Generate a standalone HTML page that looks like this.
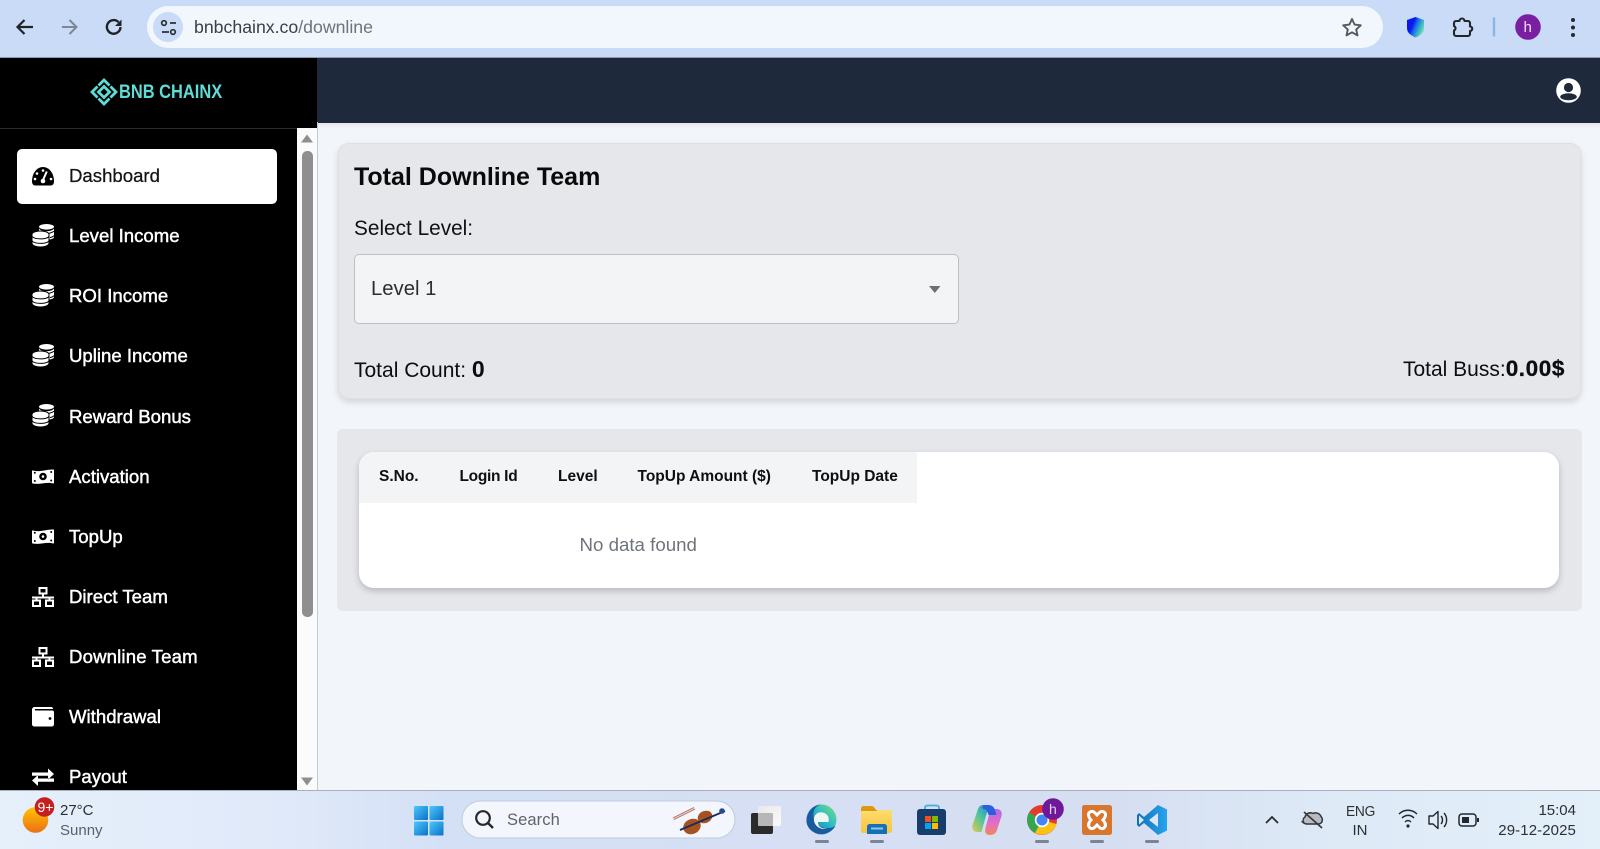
<!DOCTYPE html>
<html><head><meta charset="utf-8"><style>
*{box-sizing:border-box}
html,body{margin:0;padding:0;width:1600px;height:849px;overflow:hidden;background:#f2f6fb;font-family:"Liberation Sans",sans-serif}
.a{position:absolute}
.t{position:absolute;white-space:nowrap;line-height:1}
.m{position:absolute;left:69px;color:#fff;font-size:18.6px;line-height:24px;white-space:nowrap;-webkit-text-stroke:.45px #fff}
.ic{position:absolute;left:32px;width:22px}
.d{position:absolute;top:840px;width:14px;height:3px;border-radius:2px;background:#7b8494}
</style></head><body>
<!-- chrome -->
<div class="a" style="left:0;top:0;width:1600px;height:57px;background:#c9dbf6"></div>
<div class="a" style="left:0;top:57px;width:1600px;height:1px;background:#8f9bb0"></div>
<div class="a" style="left:147px;top:6px;width:1236px;height:42px;border-radius:21px;background:#f2f6fd"></div>
<div class="a" style="left:153px;top:12px;width:30px;height:30px;border-radius:50%;background:#c9dbf6"></div>
<div class="t" style="left:194px;top:18.500px;font-size:17.700px;color:#3c4046">bnbchainx.co<span style="color:#6f7276">/downline</span></div>
<svg class="a" style="left:0;top:0" width="1600" height="58" fill="none">
<path d="M33 27H18M24.500 20l-7 7 7 7" stroke="#202328" stroke-width="2.200"/>
<path d="M62 27H76M69.500 20l7 7-7 7" stroke="#7d8694" stroke-width="2"/>
<path d="M120.500 27a6.800 6.800 0 1 1-2-4.900" stroke="#202328" stroke-width="2.400"/><path d="M121.500 19.500v6.500h-6.500z" fill="#202328"/>
<circle cx="164" cy="23" r="2.300" stroke="#2c3036" stroke-width="1.700"/><path d="M170 23h6M162 32h7" stroke="#2c3036" stroke-width="1.700"/><circle cx="173" cy="32" r="2.300" stroke="#2c3036" stroke-width="1.700"/>
<path d="M1352 19l2.600 5.600 6.200.7-4.600 4.100 1.300 6-5.500-3.100-5.500 3.100 1.300-6-4.600-4.100 6.200-.7z" stroke="#55585e" stroke-width="1.900" stroke-linejoin="round"/>
<defs><linearGradient id="sh" x1="0" x2="1" y1="0" y2=".5"><stop offset=".4" stop-color="#0a18ee"/><stop offset=".6" stop-color="#1773ea"/><stop offset="1" stop-color="#5fe0b0"/></linearGradient></defs>
<path d="M1415.500 17l8.500 3v8c0 5-4 7.500-8.500 9.500-4.500-2-8.500-4.500-8.500-9.500v-8z" fill="url(#sh)"/>
<path d="M1456 21h3.500a2.500 2.500 0 0 1 5 0h3.500a2 2 0 0 1 2 2v3.500a2 2 0 0 1 0 4.500V34a2 2 0 0 1-2 2h-12a2 2 0 0 1-2-2v-3.500c2-1 2-3.500 0-4.500V23a2 2 0 0 1 2-2z" stroke="#23272d" stroke-width="2.100" stroke-linejoin="round"/>
<path d="M1494 17.500v19" stroke="#8fb3e6" stroke-width="2.400"/>
<circle cx="1528" cy="27" r="12.800" fill="#7a1fa2"/>
<circle cx="1573" cy="20" r="2" fill="#24272c"/><circle cx="1573" cy="27.500" r="2" fill="#24272c"/><circle cx="1573" cy="35" r="2" fill="#24272c"/>
</svg>
<div class="t" style="left:1523.500px;top:19.500px;font-size:15px;color:#f1e4f5">h</div>
<!-- app -->
<div class="a" style="left:317px;top:58px;width:1283px;height:65px;background:#1e293b"></div>
<div class="a" style="left:317px;top:123px;width:1283px;height:5px;background:linear-gradient(#e3e6ea,#f2f6fb)"></div>
<svg class="a" style="left:1555.500px;top:77.500px" width="25" height="25"><circle cx="12.500" cy="12.500" r="12.300" fill="#fff"/><circle cx="12.500" cy="9.500" r="4.600" fill="#1e293b"/><ellipse cx="12.500" cy="18.800" rx="8.300" ry="3.500" fill="#1e293b"/></svg>
<div class="a" style="left:0;top:58px;width:317px;height:732px;background:#000"></div>
<div class="a" style="left:0;top:128px;width:297px;height:1px;background:#2a2a2a"></div>
<svg class="a" style="left:90px;top:78px" width="28" height="28" fill="none" stroke="#5fdcd6" stroke-width="2.800"><path d="M8.500 7.500L14 2l5.500 5.500M20.500 8.500L26 14l-5.500 5.500M19.500 20.500L14 26l-5.500-5.500M7.500 19.500L2 14l5.500-5.500"/><path d="M14 8.500l5.500 5.500-5.500 5.500L8.500 14z"/></svg>
<div class="t" style="left:118.500px;top:83px;font-size:19px;font-weight:bold;color:#5fdcd6;transform:scaleX(.865);transform-origin:0 0">BNB CHAINX</div>
<div class="a" style="left:297px;top:128px;width:20px;height:662px;background:#fbfbfb"></div>
<div class="a" style="left:317px;top:122px;width:1px;height:668px;background:#c4c8cf"></div>
<svg class="a" style="left:297px;top:128px" width="20" height="662"><path d="M10 6.500l6 8H4z" fill="#8f8f8f"/><rect x="5" y="23" width="11" height="466" rx="5" fill="#8f8f8f"/><path d="M10 657.500l6-8H4z" fill="#8f8f8f"/></svg>
<div class="a" style="left:17px;top:149px;width:260px;height:55px;border-radius:5px;background:#fff"></div>
<svg class="ic" style="top:167px" width="22" height="19" viewBox="0 0 22 19"><path d="M0 14.500C0 6 5 0 11 0s11 6 11 14.500C22 17 20.500 18.500 19 18.500H3C1.500 18.500 0 17 0 14.500z" fill="#000"/><circle cx="11" cy="3.500" r="1.300" fill="#fff"/><circle cx="5" cy="6.500" r="1.300" fill="#fff"/><circle cx="3" cy="12" r="1.300" fill="#fff"/><circle cx="19" cy="12" r="1.300" fill="#fff"/><path d="M14.800 4.500L11 13" stroke="#fff" stroke-width="2"/><circle cx="11" cy="14" r="2.300" fill="#fff"/></svg>
<div class="m" style="top:164px;color:#141414;-webkit-text-stroke:.25px #141414">Dashboard</div>
<svg width="0" height="0" style="position:absolute"><defs>
<g id="coins"><ellipse cx="14.500" cy="2.800" rx="7.500" ry="2.800" fill="#fff"/><path d="M7 4.500V8L17.500 15.500c2.500-.3 4.500-1.300 4.500-2.500V4.500c-2 3.500-13 3.500-15 0z" fill="#fff"/><path d="M10 9.300c4 .8 9 .3 12-2M18 13.600c2-.4 3.200-1 4-2" stroke="#000" stroke-width="1" fill="none"/><path d="M0 10.500V19c0 5.300 17 5.300 17 0V10.500c0-4.700-17-4.700-17 0z" fill="#fff" stroke="#000" stroke-width="1"/><path d="M0 12.200c2 3.500 15 3.500 17 0M0 16.700c2 3.500 15 3.500 17 0" stroke="#000" stroke-width="1" fill="none"/></g>
<g id="money"><path d="M1 1.500C8 3.500 15 0 21.500 .5c.4 0 .5.500.5 1v12c0 .5-.2 1-.8 1C15 12.500 7.500 16 .8 14.500c-.5 0-.8-.5-.8-1V2c0-.4.300-.6 1-.5z" fill="#fff"/><circle cx="11" cy="7.500" r="3.800" fill="#000"/><circle cx="11" cy="7.500" r="1.300" fill="#fff"/><circle cx="2.800" cy="3.800" r="1" fill="#000"/><circle cx="19.200" cy="3" r="1" fill="#000"/><circle cx="2.800" cy="12" r="1" fill="#000"/><circle cx="19.200" cy="11.500" r="1" fill="#000"/></g>
<g id="net" fill="none" stroke="#fff" stroke-width="2"><rect x="7.500" y="1" width="7" height="5.500"/><path d="M11 6.500v4M0 10.500h22M4.500 10.500v3M17.500 10.500v3"/><rect x="1" y="13.500" width="7" height="5.500"/><rect x="14" y="13.500" width="7" height="5.500"/></g>
</defs></svg>
<svg class="ic" style="top:224px" width="22" height="23"><use href="#coins"/></svg><div class="m" style="top:224px">Level Income</div>
<svg class="ic" style="top:284px" width="22" height="23"><use href="#coins"/></svg><div class="m" style="top:284px">ROI Income</div>
<svg class="ic" style="top:344px" width="22" height="23"><use href="#coins"/></svg><div class="m" style="top:344px">Upline Income</div>
<svg class="ic" style="top:404px" width="22" height="23"><use href="#coins"/></svg><div class="m" style="top:404.500px">Reward Bonus</div>
<svg class="ic" style="top:469px" width="22" height="16"><use href="#money"/></svg><div class="m" style="top:464.500px">Activation</div>
<svg class="ic" style="top:529px" width="22" height="16"><use href="#money"/></svg><div class="m" style="top:524.500px">TopUp</div>
<svg class="ic" style="top:587px" width="22" height="20"><use href="#net"/></svg><div class="m" style="top:585px">Direct Team</div>
<svg class="ic" style="top:647px" width="22" height="20"><use href="#net"/></svg><div class="m" style="top:645px;letter-spacing:.15px">Downline Team</div>
<svg class="ic" style="top:707px" width="22" height="20"><path d="M3 0h16c1.500 0 2 .8 2 2H3.500C2.500 2 2.500 3.500 3.500 3.500H20c1.500 0 2 .8 2 2V17c0 1.500-.8 2.500-2.500 2.500h-17C1 19.500 0 18.500 0 17V3c0-2 1-3 3-3z" fill="#fff"/><circle cx="18" cy="11.500" r="1.400" fill="#000"/></svg><div class="m" style="top:705px">Withdrawal</div>
<svg class="ic" style="top:768px" width="22" height="18"><path d="M0 4.500h16V.5l6 5.500-6 5.500V7.800H0zM22 10.500H6V7L0 12.500l6 5.500v-4.200h16z" fill="#fff"/></svg><div class="m" style="top:765px">Payout</div>
<!-- card 1 -->
<div class="a" style="left:338px;top:143px;width:1243px;height:256px;background:#e5e7eb;border:1px solid #dcdfe4;border-radius:11px;box-shadow:0 3px 7px rgba(0,0,0,.14)"></div>
<div class="t" style="left:354px;top:165px;font-size:25px;font-weight:bold;color:#0a0a0a">Total Downline Team</div>
<div class="t" style="left:354px;top:218.500px;font-size:20.800px;color:#111">Select Level:</div>
<div class="a" style="left:353.500px;top:254px;width:605px;height:70px;background:#f3f4f6;border:1px solid #bcc0c6;border-radius:5px"></div>
<div class="t" style="left:371px;top:279px;font-size:20.300px;color:#2a2d33">Level 1</div>
<svg class="a" style="left:928px;top:285px" width="14" height="9"><path d="M1 1h11.500L6.800 8z" fill="#6b7078"/></svg>
<div class="t" style="left:354px;top:358px;font-size:21px;color:#0d0d0d">Total Count: <b style="font-size:23px">0</b></div>
<div class="t" style="right:35px;top:358px;font-size:21px;color:#0d0d0d">Total Buss:<b style="font-size:22.500px;letter-spacing:.6px;-webkit-text-stroke:.3px #0d0d0d">0.00$</b></div>
<!-- card 2 -->
<div class="a" style="left:337px;top:429px;width:1245px;height:182px;background:#e5e7eb;border-radius:6px"></div>
<div class="a" style="left:359px;top:452px;width:1200px;height:136px;background:#fff;border-radius:15px;box-shadow:0 3px 7px rgba(0,0,0,.2);overflow:hidden"><div class="a" style="left:0;top:0;width:558px;height:51px;background:#f3f4f6"></div></div>
<div class="t" style="left:379px;top:468.500px;font-size:15.500px;font-weight:bold;color:#0f0f0f">S.No.</div>
<div class="t" style="left:459.500px;top:468.500px;font-size:15.500px;font-weight:bold;color:#0f0f0f;letter-spacing:-.3px">Login Id</div>
<div class="t" style="left:558px;top:468.500px;font-size:15.500px;font-weight:bold;color:#0f0f0f">Level</div>
<div class="t" style="left:637.500px;top:468.500px;font-size:15.500px;font-weight:bold;color:#0f0f0f">TopUp Amount ($)</div>
<div class="t" style="left:812px;top:468.500px;font-size:15.500px;font-weight:bold;color:#0f0f0f">TopUp Date</div>
<div class="t" style="left:579.500px;top:536px;font-size:18.700px;color:#6f747c">No data found</div>
<!-- taskbar -->
<div class="a" style="left:0;top:790px;width:1600px;height:59px;background:linear-gradient(90deg,#e6f0fb 0,#dfe9f9 18%,#d4e0f6 28%,#d6dff3 50%,#d6dff2 70%,#dde9f6 82%,#e3eff9 100%)"></div>
<div class="a" style="left:0;top:790px;width:1600px;height:1px;background:#a9b0bb"></div>
<svg class="a" style="left:0;top:790px" width="1600" height="59" fill="none">
<defs><linearGradient id="sun" x1="0" x2="0" y1="0" y2="1"><stop offset="0" stop-color="#ffc400"/><stop offset="1" stop-color="#ea6f17"/></linearGradient>
<linearGradient id="win" x1="0" x2="1" y1="0" y2="1"><stop offset="0" stop-color="#4dc8fb"/><stop offset="1" stop-color="#0a70c8"/></linearGradient>
<linearGradient id="edge" x1="0" x2="1" y1="1" y2="0"><stop offset="0" stop-color="#1560a8"/><stop offset=".55" stop-color="#2bb8c9"/><stop offset="1" stop-color="#7ae37a"/></linearGradient>
<linearGradient id="fold" x1="0" x2="0" y1="0" y2="1"><stop offset="0" stop-color="#ffe07a"/><stop offset="1" stop-color="#f9c53a"/></linearGradient>
<linearGradient id="copL" x1="1" x2="0" y1="0" y2="1"><stop offset="0" stop-color="#2f6fe0"/><stop offset=".5" stop-color="#48c6a0"/><stop offset="1" stop-color="#e2c850"/></linearGradient>
<linearGradient id="copR" x1="0" x2="0" y1="0" y2="1"><stop offset="0" stop-color="#b06ae8"/><stop offset=".6" stop-color="#e86ec0"/><stop offset="1" stop-color="#f08a50"/></linearGradient>
<linearGradient id="vs" x1="0" x2="1" y1="0" y2="0"><stop offset="0" stop-color="#1070b8"/><stop offset="1" stop-color="#28a4ee"/></linearGradient>
<linearGradient id="tv" x1="0" x2="1" y1="0" y2="1"><stop offset="0" stop-color="#e8e8ec"/><stop offset="1" stop-color="#fafafa"/></linearGradient></defs>
<circle cx="35.500" cy="30" r="12.800" fill="url(#sun)"/><circle cx="44.500" cy="17" r="9.800" fill="#c4211e"/>
<rect x="414" y="16" width="14" height="14" fill="url(#win)" rx="1"/><rect x="429.500" y="16" width="14" height="14" fill="url(#win)" rx="1"/><rect x="414" y="31.500" width="14" height="14" fill="url(#win)" rx="1"/><rect x="429.500" y="31.500" width="14" height="14" fill="url(#win)" rx="1"/>
<rect x="462" y="11" width="273" height="37" rx="18.500" fill="#f3f7fd" stroke="#c1cbdc"/>
<circle cx="483" cy="28" r="6.800" stroke="#25282c" stroke-width="2.200"/><path d="M488 33l5 5" stroke="#25282c" stroke-width="2.400"/>
<path d="M673 28l21-10.500M674 29.500l21-10.500" stroke="#b9786a" stroke-width="1"/>
<ellipse cx="692" cy="36.500" rx="9" ry="7.500" fill="#a6511f" transform="rotate(-25 692 36.500)"/><ellipse cx="705" cy="27" rx="7.500" ry="6" fill="#a6511f" transform="rotate(-25 705 27)"/>
<path d="M680 40l45-19" stroke="#1c2a5c" stroke-width="1.800"/><circle cx="722" cy="21" r="2.800" fill="#2a4a90"/>
<rect x="751" y="23" width="22" height="21" rx="2" fill="#2b2b2b"/><rect x="758" y="16" width="23" height="20" rx="2" fill="url(#tv)"/><rect x="758" y="23" width="15" height="13" rx="1" fill="#b7b7b7"/>
<circle cx="821.500" cy="29.500" r="15" fill="url(#edge)"/><path d="M806.500 31c0-9 7-16.500 15-16.500-6 1-9 6-8 12.500 1 7 8 12 15 11 3 0 5-1 7-2-3 5-9 8-14 8-8 0-15-6-15-13z" fill="#1a5a9e"/><path d="M814 28c1-5 6-7 10.500-5 3.500 1.500 5 5 4 9H818c-.5 4 3.500 7 8.500 6.500-6.500 2-13.500-3.500-12.500-10.500z" fill="#eef6f4"/>
<path d="M861 19c0-2 1-3 3-3h7c2 0 3 1 4 2.500 1 1 2 1.500 3 1.500h12c1 0 2 1 2 2v18c0 2-1 3-3 3h-26c-1 0-2-1-2-3z" fill="url(#fold)"/><path d="M861 19c0-2 1-3 3-3h7c2 0 3 1 4 2.500l2 2.500h-16z" fill="#d99a10"/><path d="M867 44v-7c0-2 1-3 3-3h14c2 0 3 1 3 3v7z" fill="#1570b8"/><rect x="871" y="37.500" width="12" height="2" fill="#8ec5ea"/>
<path d="M925 20v-2c0-2 1-2.500 2.500-2.500h9c1.500 0 2.500.5 2.500 2.500v2" stroke="#45aede" stroke-width="1.800"/><rect x="917" y="19" width="29" height="26" rx="3" fill="#173d6c"/><rect x="925" y="26" width="6" height="6" fill="#f25022"/><rect x="932" y="26" width="6" height="6" fill="#7fba00"/><rect x="925" y="33" width="6" height="6" fill="#00a4ef"/><rect x="932" y="33" width="6" height="6" fill="#ffb900"/>
<path d="M983 15c-3 0-4 2-5 4l-5.500 16c-1 4 1 7 5 7h4l5-18c1-3 3-5 6-5 0-2-2-4-5-4z" fill="url(#copL)"/><path d="M990 45c4 0 6-2 7-5l4.500-14c1-4-1-7-5-7h-6l-5 19c-1 4 0 7 4.500 7z" fill="url(#copR)"/><path d="M983 15h5c4 0 6 2 7 5l1.500 5h-8c-1-4-2-6-5-6-1 0-2-2 0-4z" fill="#2a60e0"/>
<circle cx="1042" cy="30" r="15" fill="#e33b2e"/><path d="M1029 22.500a15 15 0 0 0 6 20.500l7.500-13z" fill="#32a651"/><path d="M1035 43a15 15 0 0 0 21.500-9l-14.500-4z" fill="#fbc116"/><circle cx="1042" cy="30" r="7.200" fill="#fff"/><circle cx="1042" cy="30" r="5.500" fill="#4285f4"/><circle cx="1053" cy="19" r="10.800" fill="#70189a"/>
<rect x="1082" y="15" width="30" height="30" rx="2.500" fill="#d9762d"/><path d="M1090 22c3-2 5 1 7 3 2-2 4-5 7-3 3 2 1 6-1 8 2 2 4 5 1 8-3 2-5-1-7-3-2 2-4 5-7 3-3-3-1-6 1-8-2-2-4-6-1-8z" stroke="#fff" stroke-width="3"/>
<path d="M1158 15l9 4.500v21l-9 4.500-14-12-5 4-2-2v-10l2-2 5 4z" fill="url(#vs)"/><path d="M1158 23l-9 7 9 7z" fill="#dce6f4"/><path d="M1139 25.500l5 4.500-5 4.500z" fill="#dce6f4"/>
<path d="M1266 33l6-6 6 6" stroke="#24272c" stroke-width="1.700"/>
<path d="M1303.500 32c-1-2 0-4 1.500-5 1-4 5-5 8-3.500 3-1.500 7 0 8 3 2 2 1.500 5.500 0 6.500-1 1-2 1-3 1h-11c-2 0-3-.5-4.500-2z" fill="#b8bcc2" stroke="#33363b" stroke-width="1.500"/><path d="M1304 22l18 16" stroke="#33363b" stroke-width="1.600"/>
<path d="M1399 24c5-5 13-5 18 0M1402 28c3.500-3.500 9-3.500 12 0M1405 32c2-2 4-2 6 0" stroke="#23262b" stroke-width="1.500"/><circle cx="1408" cy="36" r="1.600" fill="#23262b"/>
<path d="M1429 26h4l5-4.500v17l-5-4.500h-4z" stroke="#23262b" stroke-width="1.400" stroke-linejoin="round"/><path d="M1441 26c2 2 2 6 0 8M1444 23c3.500 4 3.500 10 0 14" stroke="#23262b" stroke-width="1.400"/>
<rect x="1459" y="24" width="17" height="12" rx="3" stroke="#23262b" stroke-width="1.500"/><rect x="1462" y="27" width="7" height="6" fill="#23262b"/><rect x="1477" y="28" width="2" height="4" fill="#23262b"/>
</svg>
<div class="t" style="left:37.500px;top:800px;font-size:14px;color:#fff">9+</div>
<div class="t" style="left:60px;top:803px;font-size:15px;color:#2b2f35">27°C</div>
<div class="t" style="left:60px;top:822.500px;font-size:15px;color:#5a6068">Sunny</div>
<div class="t" style="left:507px;top:812px;font-size:16.500px;letter-spacing:.1px;color:#5f646b">Search</div>
<div class="t" style="left:1049px;top:802px;font-size:14px;color:#e2d2ea">h</div>
<div class="t" style="left:1345.500px;top:803.500px;font-size:15px;letter-spacing:-.3px;color:#2d3035;transform:scaleX(.92);transform-origin:0 0">ENG</div>
<div class="t" style="left:1352.500px;top:823px;font-size:15px;color:#2d3035">IN</div>
<div class="t" style="right:24px;top:803px;font-size:15px;color:#2d3035">15:04</div>
<div class="t" style="right:24px;top:822.500px;font-size:15px;letter-spacing:.1px;color:#2d3035">29-12-2025</div>
<div class="d" style="left:815px"></div><div class="d" style="left:870px"></div><div class="d" style="left:1035px"></div><div class="d" style="left:1090px"></div><div class="d" style="left:1145px"></div>
</body></html>
